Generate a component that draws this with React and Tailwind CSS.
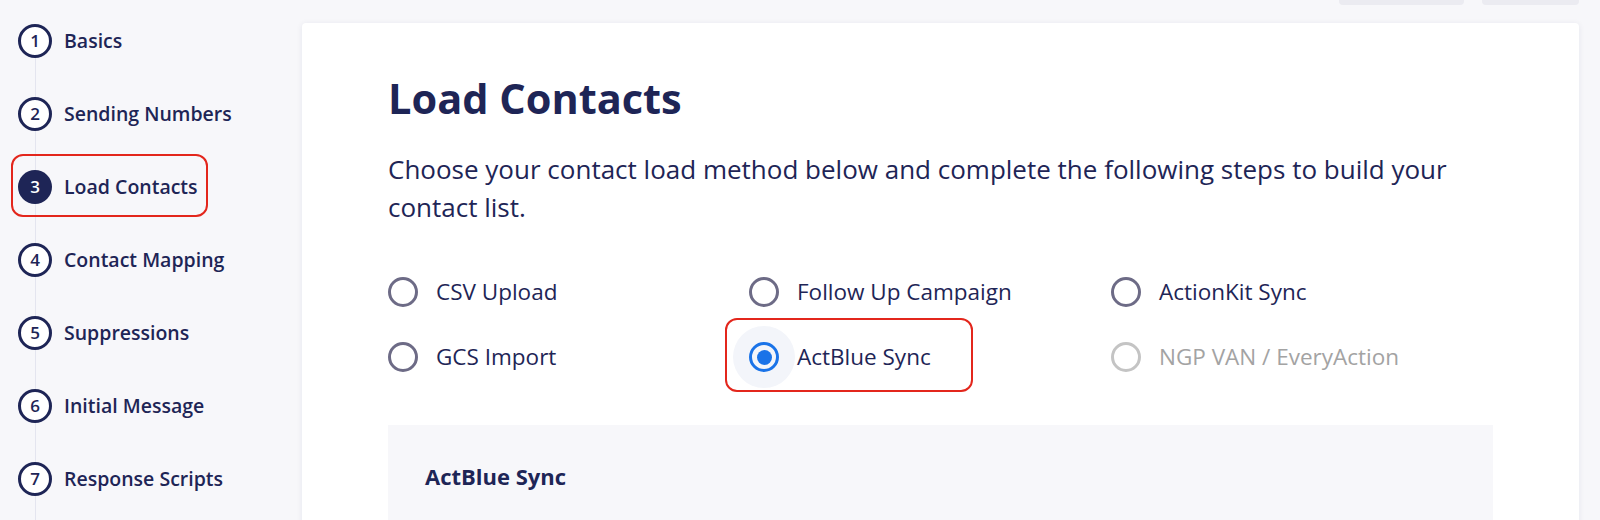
import React from "react";

const NAVY = "text-[#1e2556]";

const steps = [
  "Basics",
  "Sending Numbers",
  "Load Contacts",
  "Contact Mapping",
  "Suppressions",
  "Initial Message",
  "Response Scripts",
];

function Step({ n, label, active }) {
  return (
    <div className="relative flex h-[73px] items-start">
      {active && (
        <div className="absolute left-[-7px] top-[-16px] h-[63px] w-[197px] rounded-[12px] border-2 border-[#e3261c]" />
      )}
      <div className="flex w-[34px] flex-col items-center self-stretch">
        {active ? (
          <div className="flex h-[34px] w-[34px] items-center justify-center rounded-full bg-[#1e2556] text-[17px] font-semibold text-white">
            {n}
          </div>
        ) : (
          <div className={`flex h-[34px] w-[34px] items-center justify-center rounded-full border-[3px] border-[#1e2556] bg-white text-[17px] font-semibold ${NAVY}`}>
            {n}
          </div>
        )}
        <div className="w-px flex-1 bg-[#e4e5ef]" />
      </div>
      <div className={`ml-[12px] flex h-[34px] items-center whitespace-nowrap text-[19.5px] font-semibold ${NAVY}`}>
        {label}
      </div>
    </div>
  );
}

function Radio({ label, checked, disabled, highlight }) {
  return (
    <div className="relative flex h-[40px] items-center">
      {highlight && (
        <div className="absolute left-[-24px] top-[-19px] h-[74px] w-[248px] rounded-[12px] border-2 border-[#e3261c]" />
      )}
      <div className="relative flex h-[30px] w-[30px] shrink-0 items-center justify-center">
        {checked && (
          <div className="absolute left-[-16px] top-[-16px] h-[62px] w-[62px] rounded-full bg-[#f3f5fa]" />
        )}
        {checked ? (
          <div className="relative flex h-[30px] w-[30px] items-center justify-center rounded-full border-[3px] border-[#1a73e8]">
            <div className="h-[15px] w-[15px] rounded-full bg-[#1a73e8]" />
          </div>
        ) : (
          <div
            className={
              disabled
                ? "h-[30px] w-[30px] rounded-full border-[3px] border-[#c4c4c4]"
                : "h-[30px] w-[30px] rounded-full border-[3px] border-[#6d6b86]"
            }
          />
        )}
      </div>
      <span
        className={
          disabled
            ? "relative ml-[18px] whitespace-nowrap text-[22.5px] text-[#a3a3a3]"
            : `relative ml-[18px] whitespace-nowrap text-[22.5px] ${NAVY}`
        }
      >
        {label}
      </span>
    </div>
  );
}

export default function App() {
  return (
    <div
      className="flex h-[520px] w-[1600px] overflow-hidden bg-[#f7f7fa]"
      style={{ fontFamily: "'Open Sans', 'Noto Sans', sans-serif" }}
    >
      {/* Sidebar */}
      <div className="w-[302px] shrink-0 pl-[18px] pt-[24px]">
        {steps.map((s, i) => (
          <Step key={s} n={i + 1} label={s} active={i === 2} />
        ))}
      </div>

      {/* Main */}
      <div className="flex w-[1277px] shrink-0 flex-col">
        <div className="flex h-[23px] shrink-0 items-start justify-end gap-[18px]">
          <div className="h-[5px] w-[125px] rounded-b-[4px] bg-[#ebebf1]" />
          <div className="h-[5px] w-[97px] rounded-b-[4px] bg-[#ebebf1]" />
        </div>
        <div className="flex-1 rounded-t-[4px] bg-white px-[86px] pt-[47px] shadow-[0_1px_6px_rgba(30,37,86,0.08)]">
          <h1 className={`text-[41.5px] font-bold leading-[56px] ${NAVY}`}>Load Contacts</h1>
          <p className={`mt-[24px] whitespace-nowrap text-[26px] leading-[38px] ${NAVY}`}>
            Choose your contact load method below and complete the following steps to build your
            <br />
            contact list.
          </p>
          <div className="mt-[46px] grid grid-cols-[361px_362px_1fr] gap-y-[25px]">
            <Radio label="CSV Upload" />
            <Radio label="Follow Up Campaign" />
            <Radio label="ActionKit Sync" />
            <Radio label="GCS Import" />
            <Radio label="ActBlue Sync" checked highlight />
            <Radio label="NGP VAN / EveryAction" disabled />
          </div>
          <div className="mt-[48px] h-[120px] bg-[#f7f7fa] pl-[37px] pt-[35px]">
            <div className={`text-[22px] font-bold ${NAVY}`}>ActBlue Sync</div>
          </div>
        </div>
      </div>
    </div>
  );
}
